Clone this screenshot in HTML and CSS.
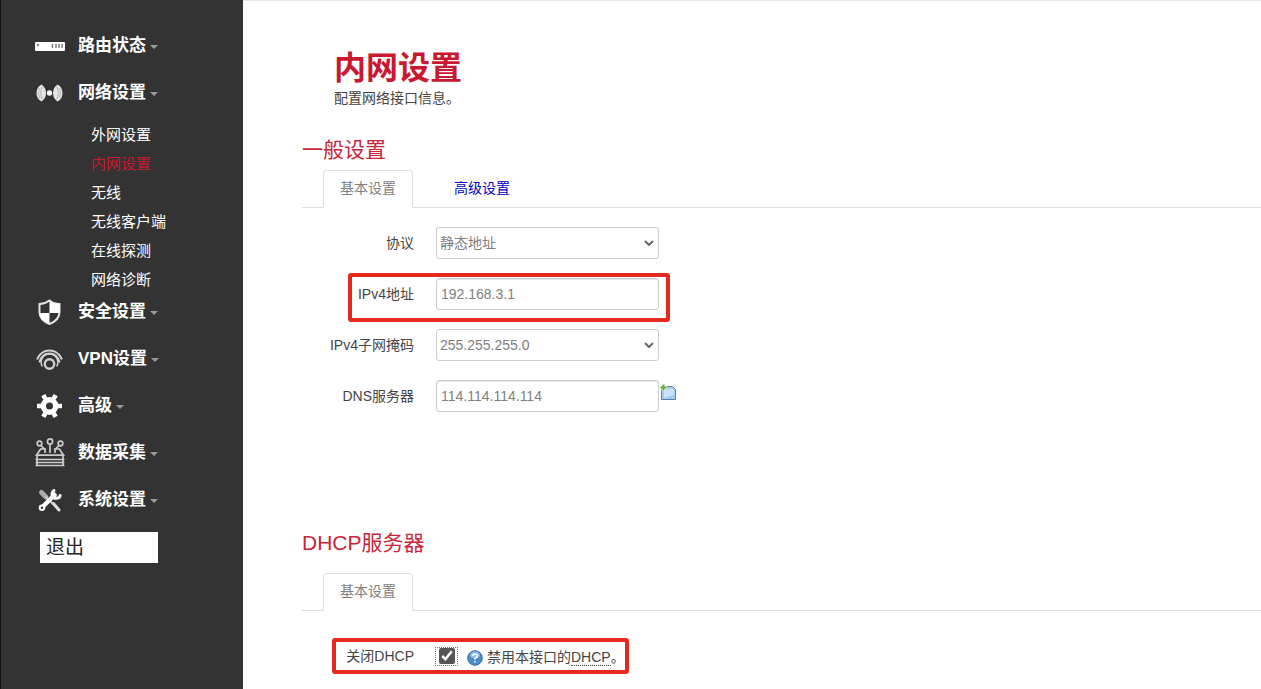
FILE: index.html
```html
<!DOCTYPE html>
<html lang="zh-CN">
<head>
<meta charset="utf-8">
<title>内网设置</title>
<link rel="stylesheet" href="styles.css">
</head>
<body>
<div class="layout">
  <nav class="sidebar">
    <ul class="menu">
      <li><a class="menu-item" href="#">
        <svg class="icon" viewBox="0 0 32 32"><rect x="1" y="12" width="30" height="9" rx="1" fill="#fff"/><circle cx="4" cy="15" r="1" fill="#555"/><path d="M18.500 14v4M22 14v4M25 14v4M28 14v4" stroke="#777" stroke-width="1.400"/></svg>
        <span>路由状态</span><i class="caret"></i></a></li>
      <li><a class="menu-item" href="#">
        <svg class="icon" viewBox="0 0 32 32"><circle cx="15.500" cy="16" r="2.700" fill="#fff"/><path d="M7.500 7.500Q2.500 10 2.500 16t5 8.500q4.500-3 4.500-8.500T7.500 7.500zM23.500 7.500Q28.500 10 28.500 16t-5 8.500Q19 21.500 19 16t4.500-8.500z" fill="#e4e4e4"/><path d="M8 9.500q-3 6.500 0 13M23 9.500q3 6.500 0 13M5.300 11q-1.500 5 0 10M25.700 11q1.500 5 0 10" fill="none" stroke="#aaa" stroke-width=".8"/></svg>
        <span>网络设置</span><i class="caret"></i></a>
        <ul class="submenu">
          <li><a href="#">外网设置</a></li>
          <li><a class="active" href="#">内网设置</a></li>
          <li><a href="#">无线</a></li>
          <li><a href="#">无线客户端</a></li>
          <li><a href="#">在线探测</a></li>
          <li><a href="#">网络诊断</a></li>
        </ul></li>
      <li><a class="menu-item" href="#">
        <svg class="icon" viewBox="0 0 32 32"><path d="M15.500 4.500Q20 8 25.500 8v8q0 8-10 12-10-4-10-12V8q5.500 0 10-3.500z" fill="#333" stroke="#e4e4e4" stroke-width="2"/><path d="M15.500 5q4.500 3 10 3v9h-10zM5.500 17h10v11Q6 24 5.500 17z" fill="#fff"/></svg>
        <span>安全设置</span><i class="caret"></i></a></li>
      <li><a class="menu-item" href="#">
        <svg class="icon" viewBox="0 0 32 32" fill="none" stroke="#d0d0d0"><circle cx="15.500" cy="21" r="4.700" stroke-width="2.400"/><path d="M8.300 23.500a8.300 8.300 0 1 1 14.400 0" stroke-width="1.500"/><path d="M5.300 19.500q2.500-9 10.200-9t10.200 9M3 16.500Q7 7.500 15.500 7.500T28 16.500" stroke-width="1.900"/></svg>
        <span>VPN设置</span><i class="caret"></i></a></li>
      <li><a class="menu-item" href="#">
        <svg class="icon" viewBox="0 0 32 32"><circle cx="15.500" cy="16" r="6.200" fill="none" stroke="#fff" stroke-width="5.400"/><path d="M3 16h4M24 16h4M9.300 5.200l2 3.500M19.700 23.300l2 3.500M21.700 5.200l-2 3.500M11.300 23.300l-2 3.500" stroke="#fff" stroke-width="4.600"/></svg>
        <span>高级</span><i class="caret"></i></a></li>
      <li><a class="menu-item" href="#">
        <svg class="icon" viewBox="0 0 32 32" fill="none" stroke="#ccc" stroke-width="1.700"><circle cx="16" cy="4.500" r="2.600"/><circle cx="5.500" cy="6.500" r="2.300"/><circle cx="26.500" cy="6.500" r="2.300"/><path d="M16 7v9M7 8.500l4 4V16M25 8.500l-4 4V16M7 11.500l-4.500 6.700h27L25 11.500M7 12h5M20 12h5M3.500 18.500l-1 4h27l-1-4M3.500 22.500l-1 3h27l-1-3M3.500 25.500l-1 3h27l-1-3"/></svg>
        <span>数据采集</span><i class="caret"></i></a></li>
      <li><a class="menu-item" href="#">
        <svg class="icon" viewBox="0 0 32 32" fill="none" stroke-linecap="round"><path d="M7.500 8.500l4.500 4.500" stroke="#aaa" stroke-width="5"/><path d="M12 13l13 13" stroke="#ccc" stroke-width="2"/><path d="M19.500 19.500l5.500 6.500" stroke="#ddd" stroke-width="3"/><path d="M8 23.500L20.500 11" stroke="#fff" stroke-width="4.500"/><path d="M20 6.500q-3 2.500-1.500 5.500t5 2q2 0 2.700-2.500" stroke="#fff" stroke-width="3"/><circle cx="8" cy="23.700" r="3.300" fill="#fff"/><circle cx="8" cy="23.700" r="1.200" fill="#333"/></svg>
        <span>系统设置</span><i class="caret"></i></a></li>
    </ul>
    <button class="logout" type="button">退出</button>
  </nav>

  <main class="content">
    <header class="page-head">
      <h1>内网设置</h1>
      <p>配置网络接口信息。</p>
    </header>

    <section class="section general">
      <h2>一般设置</h2>
      <div class="tabs">
        <a class="tab current" href="#">基本设置</a>
        <a class="tab" href="#">高级设置</a>
      </div>
      <form class="fields">
        <div class="field">
          <label for="proto">协议</label>
          <span class="select-wrap"><select id="proto"><option>静态地址</option></select><svg class="chevron" viewBox="0 0 10 6"><path d="M1 1l4 4 4-4"/></svg></span>
        </div>
        <div class="field marked">
          <label for="ip">IPv4地址</label>
          <input type="text" id="ip" value="192.168.3.1">
        </div>
        <div class="field">
          <label for="mask">IPv4子网掩码</label>
          <span class="select-wrap"><select id="mask"><option>255.255.255.0</option></select><svg class="chevron" viewBox="0 0 10 6"><path d="M1 1l4 4 4-4"/></svg></span>
        </div>
        <div class="field">
          <label for="dns">DNS服务器</label>
          <input type="text" id="dns" value="114.114.114.114">
          <button class="add" type="button" aria-label="添加"><svg viewBox="0 0 16 16"><path d="M1.500 3.500v12h14v-10l-3-3h-9z" fill="#a5caee" stroke="#5483b5"/><path d="M4 7l7-3 3 2v5l-10 3z" fill="#c8e1f8"/><path d="M3.500 0v7M0 3.500h7" stroke="#fff" stroke-width="3.500"/><path d="M3.500 .5v6M.5 3.500h6" stroke="#5cab37" stroke-width="2"/></svg></button>
        </div>
      </form>
    </section>

    <section class="section dhcp">
      <h2>DHCP服务器</h2>
      <div class="tabs">
        <a class="tab current" href="#">基本设置</a>
      </div>
      <form class="toggle-row">
        <label for="ignore">关闭DHCP</label>
        <span class="check-focus"><input type="checkbox" id="ignore" checked></span>
        <svg class="help" viewBox="0 0 16 16"><circle cx="8" cy="8" r="7.300" fill="#4b8ccb" stroke="#3c6f9f"/><ellipse cx="8" cy="5" rx="5" ry="3.500" fill="#8cbce8"/><path d="M5.800 6.200q0-2.200 2.200-2.200t2.300 2q0 1.200-1.300 1.800T8 9.500M8 11v1.500" fill="none" stroke="#fff" stroke-width="1.500"/></svg>
        <span class="hint">禁用本接口的<abbr title="动态主机配置协议">DHCP</abbr>。</span>
      </form>
    </section>
  </main>
</div>
</body>
</html>
```
FILE: styles.css
```css
*,
*::after { box-sizing: border-box; }

body {
  margin: 0;
  background: #fff;
  color: #444;
  font: 14px/20px "Liberation Sans", "Noto Sans CJK SC", sans-serif;
}

a { text-decoration: none; }
ul { list-style: none; margin: 0; padding: 0; }
h1, h2, p { margin: 0; }

.layout {
  display: flex;
  min-height: 100vh;
  overflow: hidden;
}

.sidebar {
  flex: 0 0 243px;
  padding: 31px 0 24px;
  background: #333;
  border-left: 1px solid #111;
}

.menu {
  display: flex;
  flex-direction: column;
  gap: 17px;
}

.menu-item {
  display: flex;
  align-items: center;
  height: 30px;
  padding-left: 33px;
  color: #fff;
  font-size: 17px;
  font-weight: bold;
}

.icon {
  width: 32px;
  height: 32px;
  margin-right: 12px;
}

.caret {
  margin: 2px 0 0 4px;
  border: 4px solid transparent;
  border-top-color: #999;
  border-bottom: 0;
}

.submenu {
  margin: 12px 0 -14px;
  padding-left: 90px;
  font-size: 15px;
  line-height: 29px;
}

.submenu a { color: #fff; }
.submenu .active { color: #c9182f; }

.logout {
  display: block;
  width: 118px;
  height: 31px;
  margin: 17px 0 0 39px;
  padding: 0 6px;
  border: 0;
  background: #fff;
  color: #222;
  font: 19px/31px "Liberation Sans", "Noto Sans CJK SC", sans-serif;
  text-align: left;
}

.content {
  flex: 1;
  min-width: 0;
  padding: 47px 0 0 59px;
  border-top: 1px solid #e8e8e8;
}

.page-head { padding-left: 32px; }

h1 {
  color: #c9182f;
  font-size: 32px;
  line-height: 40px;
}

h2 {
  color: #c9243a;
  font-size: 21px;
  font-weight: normal;
  line-height: 30px;
}

.general { margin-top: 27px; }
.dhcp { margin-top: 116px; }

.tabs {
  display: flex;
  gap: 24px;
  height: 38px;
  margin-top: 5px;
  padding-left: 21px;
  border-bottom: 1px solid #ddd;
}

.dhcp .tabs { margin-top: 15px; }

.tab {
  height: 38px;
  padding: 0 16px;
  border: 1px solid transparent;
  border-bottom: 0;
  border-radius: 4px 4px 0 0;
  color: #0000c8;
  line-height: 35px;
}

.tab.current {
  border-color: #ddd;
  background: #fff;
  color: #808080;
}

.fields {
  display: flex;
  flex-direction: column;
  gap: 19px;
  margin-top: 19px;
}

.field {
  position: relative;
  display: flex;
  align-items: center;
  height: 32px;
}

.field label {
  width: 112px;
  margin-right: 22px;
  text-align: right;
}

.field input,
.field select {
  width: 223px;
  height: 32px;
  padding: 0 4px;
  border: 1px solid #ccc;
  border-radius: 3px;
  background: #fff;
  color: #808080;
  font: 14px/20px "Liberation Sans", "Noto Sans CJK SC", sans-serif;
  appearance: none;
}

.field input { box-shadow: inset 0 1px 1px #e6e6e6; }

.field select { padding: 0 3px; }

.select-wrap { position: relative; }
.select-wrap select { display: block; }

.chevron {
  position: absolute;
  top: 13px;
  right: 5px;
  width: 10px;
  height: 6px;
  fill: none;
  stroke: #666;
  stroke-width: 2;
  pointer-events: none;
}

.marked::after,
.toggle-row::after {
  content: "";
  position: absolute;
  border: 4px solid #e4291f;
  border-radius: 3px;
  pointer-events: none;
}

.marked::after {
  top: -5px;
  left: 46px;
  width: 322px;
  height: 49px;
}

.add {
  align-self: flex-start;
  width: 16px;
  height: 16px;
  margin: 4px 0 0 1px;
  padding: 0;
  border: 0;
  background: none;
}

.add svg { display: block; }

.toggle-row {
  position: relative;
  display: flex;
  align-items: center;
  height: 36px;
  margin-top: 27px;
}

.toggle-row::after {
  top: 0;
  left: 30px;
  width: 297px;
  height: 36px;
}

.toggle-row label {
  width: 112px;
  margin-right: 21px;
  text-align: right;
}

.check-focus {
  display: flex;
  align-items: center;
  justify-content: center;
  width: 23px;
  height: 19px;
  border: 1px dotted #777;
}

.check-focus input {
  width: 16px;
  height: 16px;
  margin: 0;
  accent-color: #555;
}

.help {
  width: 16px;
  height: 16px;
  margin: 3px 4px 0 9px;
}

.hint { margin-top: 2px; }

.hint abbr {
  border-bottom: 1px dotted #444;
  text-decoration: none;
}
```
